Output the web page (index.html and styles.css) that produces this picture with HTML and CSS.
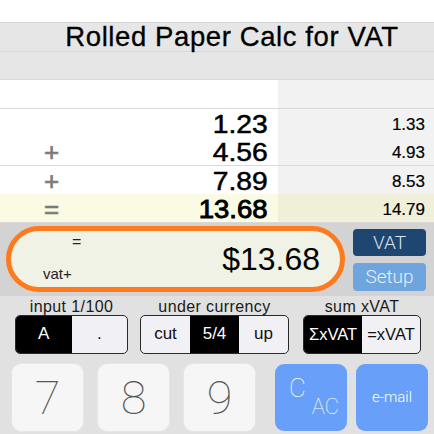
FILE: index.html
```html
<!DOCTYPE html>
<html lang="en">
<head>
    <meta charset="UTF-8">
    <meta name="viewport" content="width=device-width, initial-scale=1.0">
    <title>Rolled Paper Calc for VAT</title>
    <link rel="stylesheet" href="styles.css">
</head>
<body>
    <div class="tape">
        <div class="top"></div>
        <div class="row title">Rolled Paper Calc for VAT</div>
        <div class="row blank"></div>
        <div class="row line">
            <div class="main"></div>
            <div class="side"></div>
        </div>
        <div class="row line">
            <div class="main"><span class="num">1.23</span></div>
            <div class="side">1.33</div>
        </div>
        <div class="row line">
            <div class="main"><span class="op">+</span><span class="num">4.56</span></div>
            <div class="side">4.93</div>
        </div>
        <div class="row line">
            <div class="main"><span class="op">+</span><span class="num">7.89</span></div>
            <div class="side">8.53</div>
        </div>
        <div class="row line total">
            <div class="main"><span class="op">=</span><span class="num">13.68</span></div>
            <div class="side">14.79</div>
        </div>
    </div>

    <div class="display">
        <div class="pill">
            <div class="marks">
                <span class="mark-eq">=</span>
                <span class="mark-vat">vat+</span>
            </div>
            <div class="amount">$13.68</div>
        </div>
        <div class="side-buttons">
            <button class="btn-vat">VAT</button>
            <button class="btn-setup">Setup</button>
        </div>
    </div>

    <div class="panel">
        <div class="options">
            <div class="opt opt-input">
                <div class="opt-label">input 1/100</div>
                <div class="segment">
                    <span class="seg on">A</span>
                    <span class="seg">.</span>
                </div>
            </div>
            <div class="opt opt-currency">
                <div class="opt-label">under currency</div>
                <div class="segment">
                    <span class="seg">cut</span>
                    <span class="seg on">5/4</span>
                    <span class="seg">up</span>
                </div>
            </div>
            <div class="opt opt-sum">
                <div class="opt-label">sum xVAT</div>
                <div class="segment">
                    <span class="seg on">ΣxVAT</span>
                    <span class="seg">=xVAT</span>
                </div>
            </div>
        </div>

        <div class="keys">
            <div class="digits">
                <button class="key">7</button>
                <button class="key">8</button>
                <button class="key">9</button>
            </div>
            <div class="funcs">
                <button class="key blue clear"><span class="c">C</span><span class="ac">AC</span></button>
                <button class="key blue mail">e-mail</button>
            </div>
        </div>
    </div>
</body>
</html>
```

FILE: styles.css
```css
body {
    margin: 0;
    width: 434px;
    height: 434px;
    overflow: hidden;
    font-family: 'Liberation Sans', Arial, sans-serif;
    color: #000;
    background: #e1e1e1;
}

button {
    font-family: inherit;
    border: none;
    padding: 0;
    margin: 0;
    cursor: pointer;
}

/* paper tape */
.tape {
    background: #fff;
}

.top {
    height: 23px;
    box-sizing: border-box;
    border-bottom: 1px solid #d6d6d6;
    background: #fff;
}

.row {
    height: 28.5px;
    box-sizing: border-box;
    border-bottom: 1px solid #d9d9d9;
}

.title, .blank {
    background: #e6e6e6;
}

.title {
    font-size: 27.5px;
    letter-spacing: 0.6px;
    line-height: 28px;
    text-align: center;
    padding-left: 30px;
    -webkit-text-stroke: 0.3px #000;
}

.line {
    display: grid;
    grid-template-columns: 278px 1fr;
}

.main {
    display: flex;
    align-items: flex-end;
    justify-content: space-between;
    padding: 0 10px 0 44px;
    background: #fff;
}

.side {
    background: #f2f2f2;
    text-align: right;
    padding-right: 9px;
    font-size: 17px;
    line-height: 24px;
    padding-top: 4px;
    -webkit-text-stroke: 0.2px #000;
}

.op {
    color: #7a7a7a;
    font-size: 26px;
    line-height: 26px;
    width: 14px;
    text-align: center;
    -webkit-text-stroke: 0.6px #7a7a7a;
}

.num {
    margin-left: auto;
    font-size: 25px;
    line-height: 26px;
    transform: scaleX(1.13);
    transform-origin: right center;
    -webkit-text-stroke: 0.5px #000;
}

.total .main {
    background: #fbfbe4;
}

.total .side {
    background: #f0f0da;
}

.total .num {
    transform: scaleX(1.1);
    -webkit-text-stroke: 0.9px #000;
}

/* display */
.display {
    display: flex;
    align-items: flex-start;
    background: #d3d3d3;
    height: 73px;
    box-sizing: border-box;
    padding: 3px 8px 0 6px;
}

.pill {
    width: 339px;
    height: 66px;
    box-sizing: border-box;
    border: 5px solid #fd7b1e;
    border-radius: 33px;
    background: #eff2e5;
    display: flex;
    align-items: center;
    padding: 0 20px 0 32px;
}

.marks {
    display: flex;
    flex-direction: column;
    height: 100%;
    justify-content: space-between;
    padding: 2px 0 5px;
    box-sizing: border-box;
    font-size: 15px;
    color: #222;
}

.mark-eq {
    padding-left: 29px;
    font-size: 16px;
}

.amount {
    margin-left: auto;
    font-size: 32px;
    padding-top: 2px;
}

.side-buttons {
    display: flex;
    flex-direction: column;
    gap: 7px;
    margin-left: 8px;
    padding-top: 3px;
}

.btn-vat, .btn-setup {
    width: 73px;
    height: 27px;
    border-radius: 4px;
    font-size: 19px;
    font-family: Roboto, 'Liberation Sans', sans-serif;
    font-weight: 300;
}

.btn-vat {
    background: #1e4670;
    color: #d9e3ef;
}

.btn-setup {
    height: 28px;
    background: #6fa5df;
    color: #e6effa;
}

/* options and keys */
.panel {
    padding-top: 4px;
}

.options {
    display: flex;
    padding-left: 15px;
}

.opt {
    display: flex;
    flex-direction: column;
    align-items: center;
}

.opt-input { width: 113px; }
.opt-currency { width: 149px; margin-left: 12px; }
.opt-sum { width: 118px; margin-left: 14px; }

.opt-label {
    font-size: 16px;
    letter-spacing: 0.4px;
    line-height: 14px;
    color: #1a1a1a;
}

.segment {
    display: flex;
    width: 100%;
    height: 39px;
    box-sizing: border-box;
    border: 1px solid #2a2a2a;
    border-radius: 5px;
    overflow: hidden;
    background: #f0f0f5;
    margin-top: 1px;
}

.seg {
    flex: 1;
    display: flex;
    align-items: center;
    justify-content: center;
    font-size: 17px;
    color: #111;
}

.seg.on {
    background: #000;
    color: #fff;
}

.opt-sum .seg {
    font-size: 16.5px;
}

.keys {
    display: flex;
    padding: 10px 0 0 12px;
    gap: 20px;
}

.digits, .funcs {
    display: flex;
}

.digits { gap: 15px; }
.funcs { gap: 9px; }

.key {
    width: 71px;
    height: 67px;
    border-radius: 9px;
    background: #f6f6f6;
    box-shadow: 0 0 0 1px #e6e6e6;
    font-family: Roboto, 'Liberation Sans', sans-serif;
    font-weight: 100;
    font-size: 47px;
    color: #555;
}

.key.blue {
    width: 72px;
    background: #689ff8;
    box-shadow: none;
    color: #fff;
}

.clear {
    position: relative;
}

.clear .c {
    position: absolute;
    left: 14px;
    top: 9px;
    font-size: 26px;
}

.clear .ac {
    position: absolute;
    right: 8px;
    bottom: 12px;
    font-size: 22px;
}

.mail {
    font-size: 15px;
    font-weight: 300;
}
```
